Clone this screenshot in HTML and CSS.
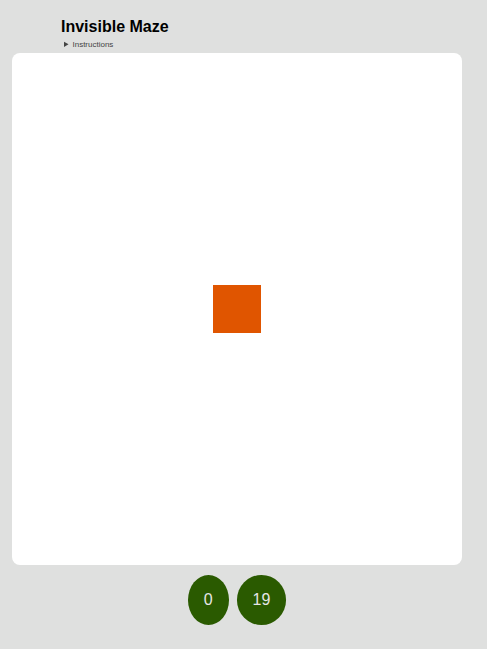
FILE: index.html
```html
<!DOCTYPE html>
<html>
<head>
<meta charset="utf-8">
<link rel="stylesheet" href="styles.css">
</head>
<body>
<div class="header">
  <h1 class="title">Invisible Maze</h1>
  <details class="instructions"><summary>Instructions</summary></details>
</div>
<div class="board">
  <div class="player"></div>
</div>
<div class="scores">
  <div class="score">0</div>
  <div class="score">19</div>
</div>
</body>
</html>
```
FILE: styles.css
```css
html, body {
  margin: 0;
  padding: 0;
  background: #dfe0df;
  font-family: "Liberation Sans", Arial, sans-serif;
}
.header {
  padding: 17px 0 0 61px;
  height: 36px;
}
.title {
  margin: 0;
  font-size: 16px;
  line-height: 20px;
  font-weight: bold;
  color: #000;
}
.instructions {
  font-size: 8px;
  color: #444;
  line-height: 12px;
  margin-left: 3px;
  margin-top: 2px;
}
.instructions summary {
  cursor: pointer;
}
.board {
  margin-left: 12px;
  width: 450px;
  height: 512px;
  background: #fff;
  border-radius: 8px;
  display: flex;
  align-items: center;
  justify-content: center;
}
.player {
  width: 48px;
  height: 48px;
  background: #e05500;
}
.scores {
  width: 450px;
  margin-left: 12px;
  margin-top: 10px;
  display: flex;
  justify-content: center;
  gap: 8px;
}
.score {
  height: 50px;
  line-height: 50px;
  padding: 0 16px;
  border-radius: 50%;
  background: #2a5a00;
  color: #e6e6e6;
  font-size: 16px;
}
```
